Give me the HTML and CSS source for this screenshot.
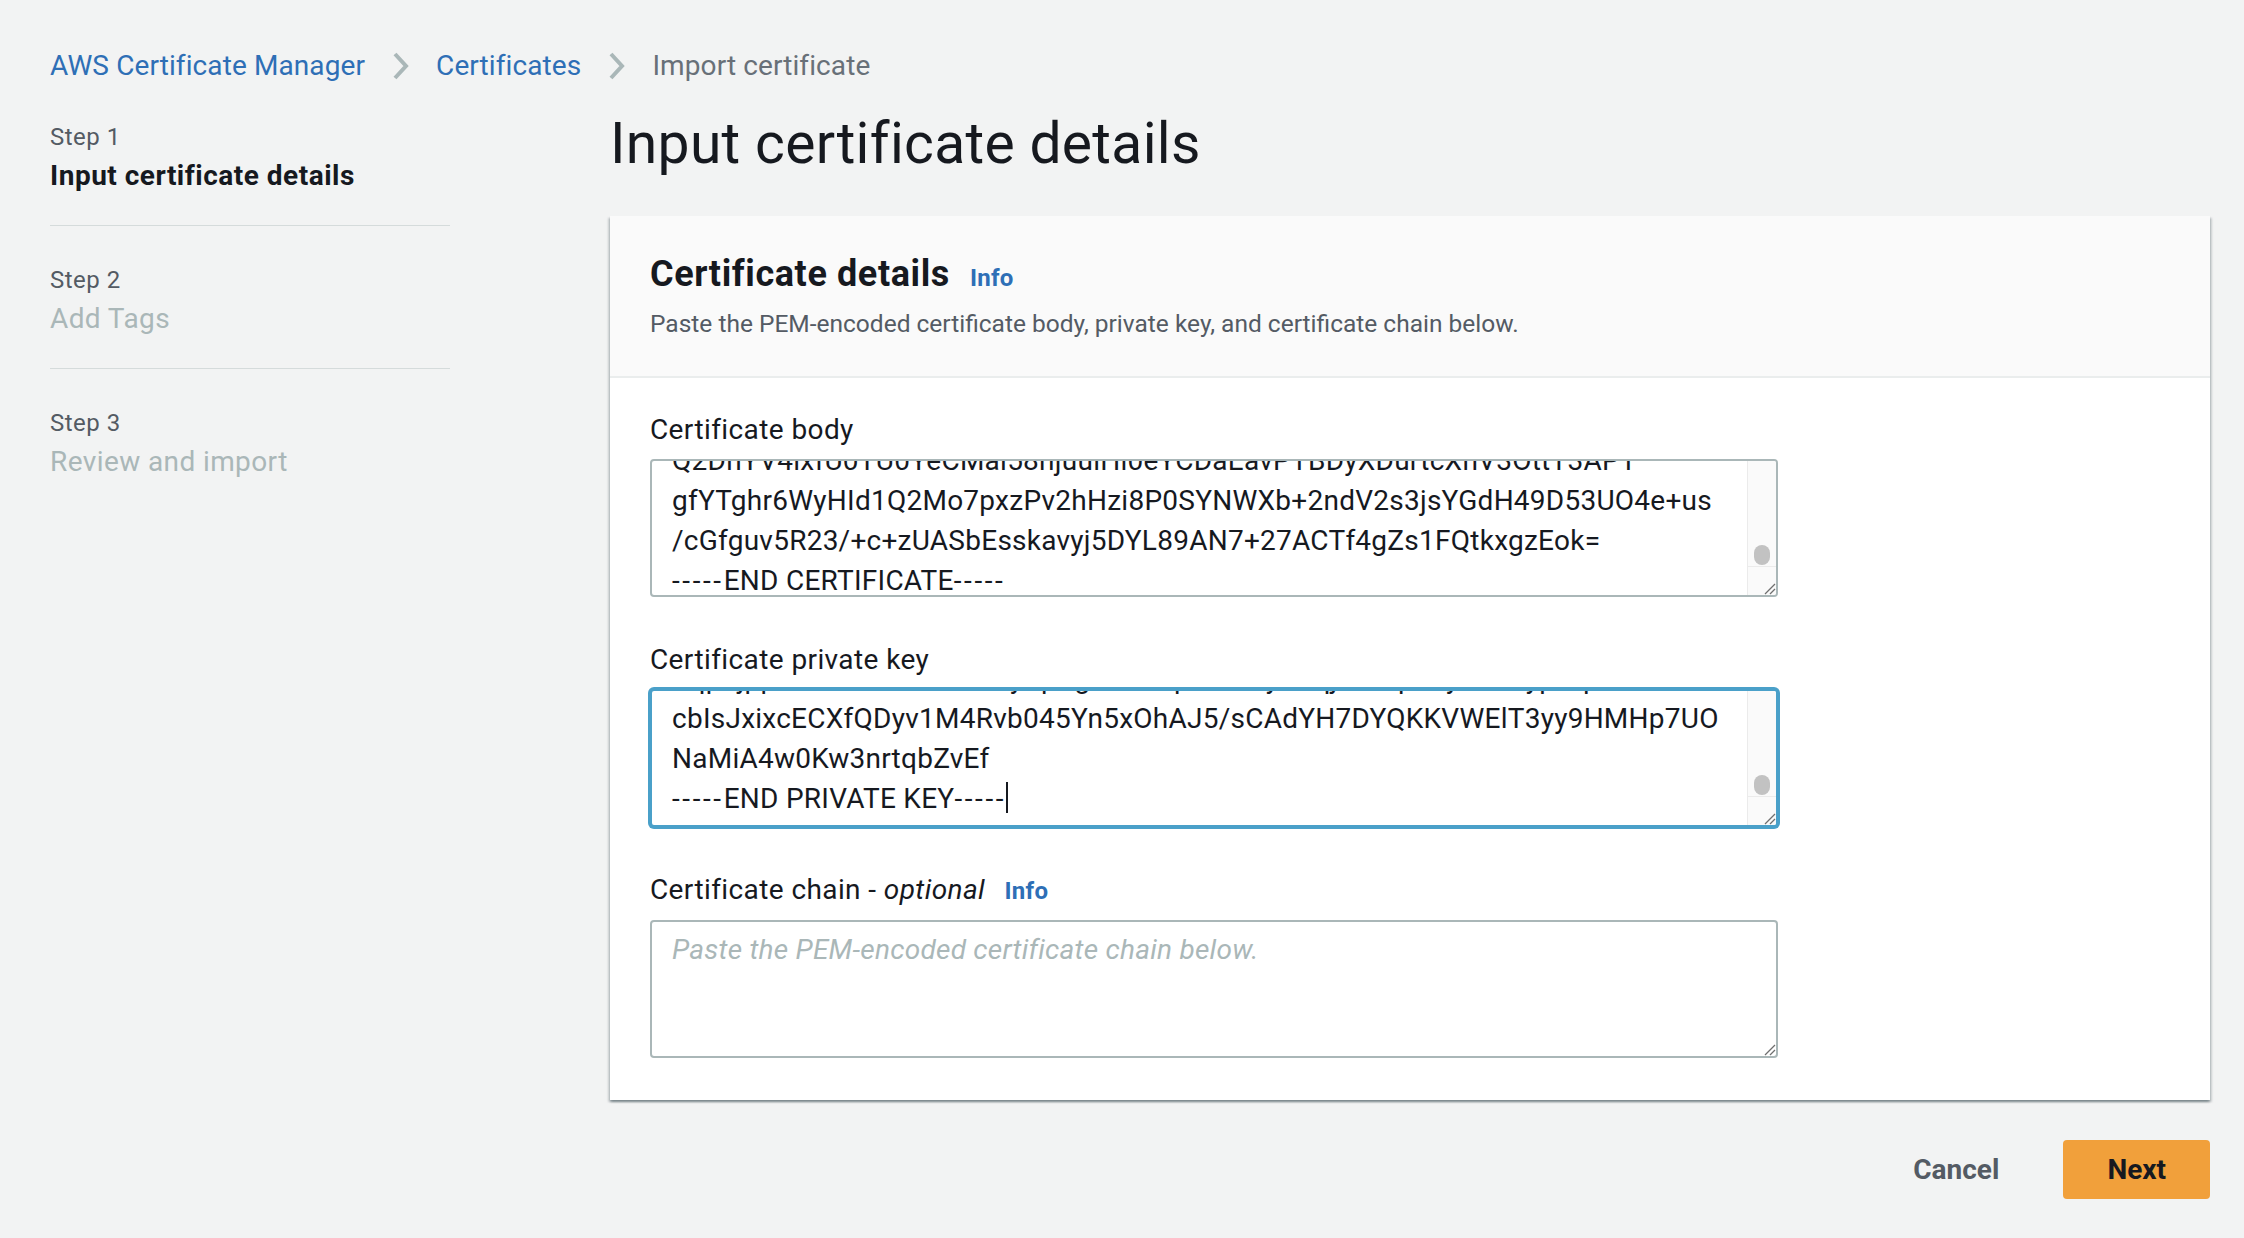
FILE: index.html
```html
<!DOCTYPE html>
<html lang="en">
<head>
<meta charset="utf-8">
<title>Import certificate</title>
<link rel="stylesheet" href="styles.css">
</head>
<body>
<div class="page">
  <nav class="breadcrumb">
    <a class="crumb-link" href="#">AWS Certificate Manager</a>
    <svg class="chev" viewBox="0 0 17 28" aria-hidden="true"><path d="M3 2 L14 14 L3 26" fill="none" stroke="#aab7b8" stroke-width="4"/></svg>
    <a class="crumb-link" href="#">Certificates</a>
    <svg class="chev" viewBox="0 0 17 28" aria-hidden="true"><path d="M3 2 L14 14 L3 26" fill="none" stroke="#aab7b8" stroke-width="4"/></svg>
    <span class="crumb-current">Import certificate</span>
  </nav>

  <div class="layout">
    <nav class="steps">
      <ol class="step-list">
        <li class="step">
          <div class="step-num">Step 1</div>
          <div class="step-title current">Input certificate details</div>
        </li>
        <li class="step">
          <div class="step-num">Step 2</div>
          <div class="step-title">Add Tags</div>
        </li>
        <li class="step">
          <div class="step-num">Step 3</div>
          <div class="step-title">Review and import</div>
        </li>
      </ol>
    </nav>

    <main class="main">
      <h1 class="title">Input certificate details</h1>

      <section class="card">
        <header class="card-header">
          <h2 class="card-title">Certificate details <a class="info" href="#">Info</a></h2>
          <p class="card-desc">Paste the PEM-encoded certificate body, private key, and certificate chain below.</p>
        </header>

        <div class="card-body">
          <div class="field">
            <label class="label">Certificate body</label>
            <div class="ta">
              <div class="ta-lines scroll-body">
                <div class="ta-line">Q2DnYV4ixfU0TU0YeCMal58njuulHi0eYCDaEavPTBDyXDurtcXnV3OttT3APT</div>
                <div class="ta-line">gfYTghr6WyHId1Q2Mo7pxzPv2hHzi8P0SYNWXb+2ndV2s3jsYGdH49D53UO4e+us</div>
                <div class="ta-line">/cGfguv5R23/+c+zUASbEsskavyj5DYL89AN7+27ACTf4gZs1FQtkxgzEok=</div>
                <div class="ta-line"><span class="dash">-----</span>END CERTIFICATE<span class="dash">-----</span></div>
              </div>
              <div class="sb">
                <div class="sb-track"><div class="sb-thumb"></div></div>
                <div class="sb-corner">
                  <svg class="grip" viewBox="0 0 14 14" aria-hidden="true"><path d="M13 3 L3 13 M13 8 L8 13" stroke="#6f6f6f" stroke-width="1.3"/></svg>
                </div>
              </div>
            </div>
          </div>

          <div class="field">
            <label class="label">Certificate private key</label>
            <div class="ta focus">
              <div class="ta-lines scroll-key">
                <div class="ta-line">Kqp3jppWhVnQeKsQ9mFoyKpRgxTw8dpZa/vByHcqj7nGtpE6yU5MiypAq9rX</div>
                <div class="ta-line">cbIsJxixcECXfQDyv1M4Rvb045Yn5xOhAJ5/sCAdYH7DYQKKVWElT3yy9HMHp7UO</div>
                <div class="ta-line">NaMiA4w0Kw3nrtqbZvEf</div>
                <div class="ta-line"><span class="dash">-----</span>END PRIVATE KEY<span class="dash">-----</span><span class="caret"></span></div>
              </div>
              <div class="sb">
                <div class="sb-track"><div class="sb-thumb"></div></div>
                <div class="sb-corner">
                  <svg class="grip" viewBox="0 0 14 14" aria-hidden="true"><path d="M13 3 L3 13 M13 8 L8 13" stroke="#6f6f6f" stroke-width="1.3"/></svg>
                </div>
              </div>
            </div>
          </div>

          <div class="field">
            <label class="label">Certificate chain - <em>optional</em> <a class="info" href="#">Info</a></label>
            <div class="ta">
              <div class="placeholder">Paste the PEM-encoded certificate chain below.</div>
              <svg class="grip grip-corner" viewBox="0 0 14 14" aria-hidden="true"><path d="M13 3 L3 13 M13 8 L8 13" stroke="#6f6f6f" stroke-width="1.3"/></svg>
            </div>
          </div>
        </div>
      </section>

      <div class="actions">
        <button class="btn btn-cancel" type="button">Cancel</button>
        <button class="btn btn-next" type="button">Next</button>
      </div>
    </main>
  </div>
</div>
</body>
</html>
```

FILE: styles.css
```css
* {
  box-sizing: border-box;
}

body {
  margin: 0;
  background: #f2f3f3;
  font-family: Roboto, "Liberation Sans", Arial, sans-serif;
  font-size: 28px;
  line-height: 44px;
  color: #16191f;
}

.page {
  padding: 41px 34px 0 50px;
}

/* Breadcrumb */
.breadcrumb {
  display: flex;
  align-items: center;
  height: 44px;
  padding-top: 6px;
  letter-spacing: 0.1px;
}

.crumb-link {
  color: #2e6fb6;
  text-decoration: none;
}

.crumb-current {
  color: #687078;
}

.chev {
  flex: none;
  width: 17px;
  height: 28px;
  margin: 0 27px;
}

/* Two column layout */
.layout {
  display: flex;
  gap: 160px;
}

.steps {
  flex: none;
  width: 400px;
}

.step-list {
  list-style: none;
  margin: 0;
  padding: 0;
}

.step {
  padding: 38px 0 27px;
  border-bottom: 1px solid #d5dbdb;
}

.step:first-child {
  padding-top: 36px;
}

.step:last-child {
  border-bottom: none;
}

.step-num {
  font-size: 24px;
  line-height: 32px;
  letter-spacing: 0.5px;
  color: #545b64;
}

.step-title {
  margin-top: 1px;
  letter-spacing: 0.4px;
  color: #aab7b8;
}

.step-title.current {
  color: #16191f;
  font-weight: 700;
  letter-spacing: 0.5px;
}

.main {
  flex: 1;
  min-width: 0;
}

.title {
  margin: 23px 0 36px;
  font-size: 57px;
  line-height: 72px;
  font-weight: 400;
  letter-spacing: 0.3px;
  color: #16191f;
}

/* Card */
.card {
  background: #ffffff;
  box-shadow: 0 2px 2px 0 rgba(0, 28, 36, 0.3),
              2px 2px 2px 0 rgba(0, 28, 36, 0.15),
              -2px 2px 2px 0 rgba(0, 28, 36, 0.15);
}

.card-header {
  background: #fafafa;
  padding: 36px 40px;
  border-bottom: 2px solid #eaeded;
}

.card-title {
  display: flex;
  align-items: baseline;
  margin: 0;
  font-size: 36px;
  line-height: 44px;
  font-weight: 700;
  letter-spacing: 0.6px;
}

.info {
  margin-left: 20px;
  font-size: 24px;
  font-weight: 700;
  letter-spacing: 0.3px;
  color: #2e6fb6;
  text-decoration: none;
}

.card-desc {
  margin: 8px 0 0;
  font-size: 24.5px;
  line-height: 32px;
  color: #545b64;
}

.card-body {
  padding: 30px 40px 42px;
}

.field + .field {
  margin-top: 41px;
}

.label {
  display: block;
  margin-bottom: 7px;
  letter-spacing: 0.4px;
  color: #16191f;
}

.label .info {
  margin-left: 12px;
}

/* Textarea look-alikes */
.ta {
  position: relative;
  width: 1128px;
  height: 138px;
  padding: 0 51px 0 20px;
  background: #ffffff;
  border: 2px solid #aab7b8;
  border-radius: 4px;
  overflow: hidden;
}

.ta.focus {
  border-color: #4aa0c9;
  box-shadow: 0 0 0 2px #4aa0c9;
}

.ta-line {
  height: 40px;
  line-height: 40px;
  white-space: pre;
  letter-spacing: 0.25px;
}

.dash {
  letter-spacing: 2.6px;
}

.scroll-body {
  margin-top: -20px;
}

.scroll-key {
  margin-top: -32px;
}

.placeholder {
  padding-top: 8px;
  line-height: 40px;
  font-style: italic;
  letter-spacing: 0.25px;
  color: #aab7b8;
}

.caret {
  display: inline-block;
  width: 2px;
  height: 31px;
  background: #16191f;
  vertical-align: -5px;
}

/* Scrollbar overlay */
.sb {
  position: absolute;
  top: 0;
  right: 0;
  bottom: 0;
  width: 29px;
  display: flex;
  flex-direction: column;
  background: #fafafa;
  border-left: 1px solid #ebebeb;
}

.sb-track {
  flex: 1;
  display: flex;
  flex-direction: column;
  justify-content: flex-end;
  align-items: center;
  padding-bottom: 1px;
}

.sb-thumb {
  width: 16px;
  height: 20px;
  border-radius: 8px;
  background: #c2c2c2;
}

.sb-corner {
  height: 29px;
  display: flex;
  align-items: flex-end;
  justify-content: flex-end;
  border-top: 1px solid #ebebeb;
}

.grip {
  display: block;
  width: 14px;
  height: 14px;
}

.grip-corner {
  position: absolute;
  right: 0;
  bottom: 0;
}

/* Actions */
.actions {
  display: flex;
  justify-content: flex-end;
  align-items: center;
  gap: 24px;
  margin-top: 40px;
}

.btn {
  height: 59px;
  border: none;
  font-family: inherit;
  font-size: 28px;
  line-height: 59px;
  font-weight: 700;
  cursor: pointer;
}

.btn-cancel {
  padding: 0 40px;
  background: none;
  color: #545b64;
}

.btn-next {
  padding: 0 44px;
  background: #f1a03b;
  color: #16191f;
  border-radius: 4px;
}
```
